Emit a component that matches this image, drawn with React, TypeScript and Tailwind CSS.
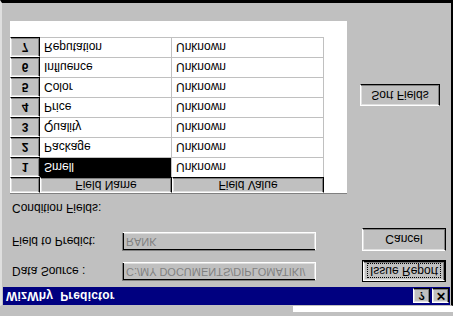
const rows = [
  { n: 1, name: 'Smell', value: 'Unknown' },
  { n: 2, name: 'Package', value: 'Unknown' },
  { n: 3, name: 'Quality', value: 'Unknown' },
  { n: 4, name: 'Price', value: 'Unknown' },
  { n: 5, name: 'Color', value: 'Unknown' },
  { n: 6, name: 'Influence', value: 'Unknown' },
  { n: 7, name: 'Reputation', value: 'Unknown' },
];

const raised =
  'border border-t-white border-l-white border-r-black border-b-black bg-[#c0c0c0] shadow-[inset_-1px_-1px_0_#808080,inset_1px_1px_0_#dfdfdf]';
const sunken =
  'border border-t-[#808080] border-l-[#808080] border-b-white border-r-white bg-[#c0c0c0] shadow-[inset_1px_1px_0_#000,inset_-1px_-1px_0_#dfdfdf]';

function Field({ label, value }: { label: string; value: string }) {
  return (
    <div className="flex items-center h-[19px]">
      <div className="w-[112px] pl-[2px] text-[12px] text-black whitespace-nowrap">{label}</div>
      <div className={`w-[194px] h-[19px] flex items-center px-[3px] overflow-hidden whitespace-nowrap text-[11px] text-[#808080] ${sunken}`}>
        {value}
      </div>
    </div>
  );
}

export default function App() {
  return (
    // the whole screen is shown upside down
    <div className="w-[453px] h-[316px] -scale-y-100 bg-[#c0c0c0] flex flex-col overflow-hidden font-['Liberation_Sans',Arial,sans-serif]">
      {/* strip behind the window */}
      <div className="h-[10px] bg-[#c0c0c0] flex">
        <div className="flex-1" />
        <div className="w-[160px] h-[6px] mt-[4px] bg-white" />
      </div>

      {/* window */}
      <div className="flex-1 flex flex-col border-l-2 border-l-[#dfdfdf] border-r-2 border-r-black border-b-[3px] border-b-black border-t border-t-[#c0c0c0]">
        {/* title bar */}
        <div className="h-[18px] mx-[1px] bg-[#000080] flex items-center pl-[3px] pr-[1px]">
          <span className="text-white font-bold text-[12px] tracking-[0.2px]">WizWhy&nbsp; Predictor</span>
          <div className="flex-1" />
          <div className={`w-[17px] h-[15px] flex items-center justify-center text-[11px] font-bold text-black ${raised}`}>?</div>
          <div className={`ml-[2px] w-[17px] h-[15px] flex items-center justify-center text-[12px] font-bold text-black ${raised}`}>✕</div>
        </div>

        {/* body */}
        <div className="flex-1 flex">
          <div className="w-[347px] pl-[8px] flex flex-col">
            <div className="mt-[6px]">
              <Field label="Data Source :" value="C:/MY DOCUMENTS/DIPLOMATIKI/" />
            </div>
            <div className="mt-[11px]">
              <Field label="Field to Predict:" value="RANK" />
            </div>
            <div className="mt-[17px] h-[14px] pl-[2px] text-[12px] leading-[14px] text-black">Condition Fields:</div>

            {/* grid */}
            <div className="mt-[7px] w-[337px] h-[173px] bg-white flex flex-col">
              <div className="flex h-[17px] border-t border-t-[#808080]">
                <div className={`w-[30px] h-[16px] ${raised}`} />
                <div className={`w-[132px] h-[16px] flex items-center justify-center text-[12px] text-black ${raised}`}>Field Name</div>
                <div className={`w-[152px] h-[16px] flex items-center justify-center text-[12px] text-black ${raised}`}>Field Value</div>
              </div>
              {rows.map(r => (
                <div key={r.n} className="flex h-[20px]">
                  <div className={`w-[30px] h-[20px] flex items-center justify-center text-[12px] font-bold text-black ${raised}`}>{r.n}</div>
                  <div
                    className={`w-[132px] h-[20px] flex items-center pl-[4px] text-[12px] border-b border-r border-[#c0c0c0] ${
                      r.n === 1 ? 'bg-black text-white' : 'bg-white text-black'
                    }`}
                  >
                    {r.name}
                  </div>
                  <div className="w-[152px] h-[20px] flex items-center pl-[4px] text-[12px] text-black bg-white border-b border-r border-[#c0c0c0]">
                    {r.value}
                  </div>
                </div>
              ))}
            </div>
          </div>

          {/* buttons */}
          <div className="flex-1 flex flex-col pl-[13px]">
            <div className="mt-[5px] w-[84px] h-[22px] border border-black">
              <div className={`w-full h-full flex items-center justify-center ${raised}`}>
                <span className="px-[2px] border border-dotted border-black text-[12px] leading-[13px] text-black">Issue Report</span>
              </div>
            </div>
            <div className={`mt-[9px] w-[84px] h-[23px] flex items-center justify-center text-[12px] text-black ${raised}`}>Cancel</div>
            <div className={`mt-[122px] -ml-[2px] w-[80px] h-[22px] flex items-center justify-center text-[12px] text-black ${raised}`}>Sort Fields</div>
          </div>
        </div>
      </div>
    </div>
  );
}
